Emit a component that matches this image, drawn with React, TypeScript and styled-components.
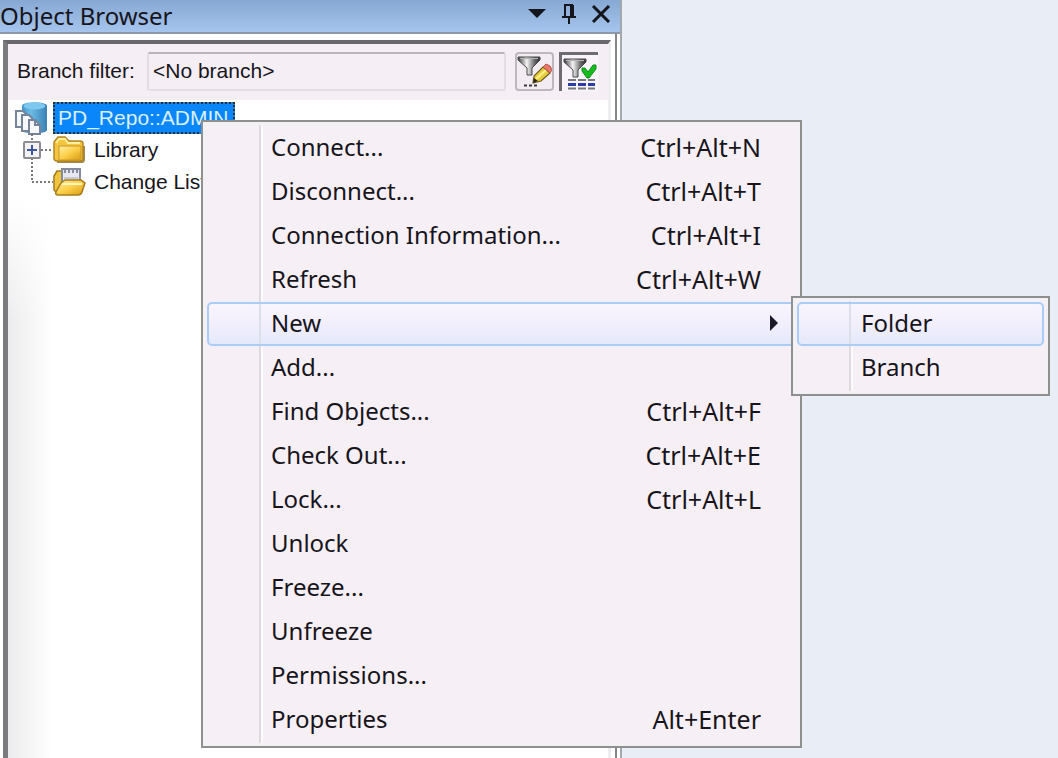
import React from "react";
import styled, { createGlobalStyle, css } from "styled-components";

const uiFont = `"Noto Sans", "Open Sans", sans-serif`;
const treeFont = `"Liberation Sans", Arial, sans-serif`;

const GlobalStyle = createGlobalStyle`
  *, *::before, *::after { box-sizing: border-box; }
  body {
    margin: 0;
    background: #e9eef6;
    color: #17151b;
    font-family: ${uiFont};
  }
`;

const Workspace = styled.div`
  position: relative;
  display: grid;
  grid-template-columns: minmax(0, 622fr) minmax(0, 436fr);
  min-height: 100vh;
  overflow: hidden;
`;

const DockPanel = styled.section`
  display: flex;
  flex-direction: column;
  background: #fff;
  border-right: 2px solid #a3a8ad;
`;

const TitleBar = styled.header`
  display: flex;
  align-items: center;
  justify-content: space-between;
  height: 34px;
  padding-right: 7px;
  background: linear-gradient(#86a8d2, #a6c5ee);
  border-bottom: 2px solid #8d99a8;
`;

const Title = styled.h1`
  margin: 0;
  font-size: 24px;
  line-height: 30px;
  font-weight: 400;
  white-space: nowrap;
`;

const TitleButtons = styled.div`
  display: flex;
  gap: 8px;
`;

const TitleButton = styled.button`
  display: grid;
  place-items: center;
  width: 24px;
  height: 28px;
  padding: 0 0 4px;
  border: 0;
  background: none;
  color: #14161c;
`;

const PanelFrame = styled.div`
  display: flex;
  flex: 1;
  margin-right: 3px;
  padding: 6px 4px 0 3px;
  border-right: 2px solid #85858a;
`;

const PanelBody = styled.div`
  display: flex;
  flex: 1;
  flex-direction: column;
  min-width: 0;
  border-top: 4px solid #69696d;
  border-left: 5px solid #7b7b7f;
  border-right: 3px solid #efedf0;
`;

const FilterBar = styled.div`
  display: flex;
  align-items: center;
  gap: 5px;
  padding: 8px 10px 9px 9px;
  background: #f5eef4;
`;

const FilterLabel = styled.label`
  flex: 0 0 125px;
  padding-bottom: 2px;
  font-family: ${treeFont};
  font-size: 21px;
  line-height: 24px;
  white-space: nowrap;
`;

const FilterInput = styled.input`
  flex: 1;
  min-width: 0;
  height: 39px;
  margin-right: 4px;
  padding: 0 4px 2px;
  border: 2px solid #e3dee3;
  border-top-color: #b9b5b9;
  border-radius: 3px;
  background: #f5eff5;
  color: #17151b;
  font-family: ${treeFont};
  font-size: 21px;
`;

const ToolButton = styled.button<{ $pressed?: boolean }>`
  display: grid;
  place-items: center;
  flex: 0 0 39px;
  height: 39px;
  padding: 0;
  ${({ $pressed }) =>
    $pressed
      ? css`
          border: 0 solid #6e6c70;
          border-width: 3px 0 0 3px;
          background: #f8f4f9;
        `
      : css`
          border: 2px solid #bdb8bd;
          border-radius: 4px;
          background: #f3edf3;
        `}
`;

const Tree = styled.ul`
  flex: 1;
  margin: 0;
  padding: 2px 0 0 6px;
  list-style: none;
  background:
    linear-gradient(#fff 100px, transparent 220px),
    linear-gradient(90deg, #ececee, #fff 44px);
`;

const TreeGroup = styled.ul`
  margin: 0;
  padding: 0;
  list-style: none;
`;

const TreeRow = styled.div`
  display: flex;
  align-items: center;
  height: 32px;
`;

const TreeText = styled.span<{ $selected?: boolean }>`
  font-family: ${treeFont};
  font-size: 21px;
  line-height: 28px;
  white-space: nowrap;
  ${({ $selected }) =>
    $selected
      ? css`
          margin-left: 5px;
          padding: 0 5px 0 3px;
          border: 2px dotted #3a2a1c;
          background: #0a86fb;
          color: #d9efff;
        `
      : css`
          margin-left: 8px;
        `}
`;

const MenuBox = styled.ul`
  position: absolute;
  margin: 0;
  padding: 4px;
  list-style: none;
  border: 2px solid #8e9090;
  background: linear-gradient(90deg, transparent 56px, #dfdade 56px, #dfdade 58px, #fcfafc 58px, #fcfafc 60px, transparent 60px),
    #f6eff5;
  box-shadow: inset 0 0 0 3px #f3f1f3;
`;

const ContextMenu = styled(MenuBox)`
  top: 120px;
  left: 201px;
  width: 601px;
`;

const SubMenu = styled(MenuBox)`
  top: -6px;
  left: calc(100% - 5px);
  width: 259px;
`;

const MenuEntry = styled.li`
  position: relative;
`;

const MenuButton = styled.button<{ $active?: boolean }>`
  display: flex;
  align-items: center;
  justify-content: space-between;
  width: 100%;
  height: 44px;
  padding: 0 33px 2px 62px;
  border: 2px solid transparent;
  border-radius: 5px;
  background: none;
  color: #17151b;
  font-family: ${uiFont};
  font-size: 24px;
  line-height: 38px;
  text-align: left;
  white-space: nowrap;
  ${({ $active }) =>
    $active &&
    css`
      border-color: #a9cdf8;
      background: linear-gradient(90deg, transparent 50px, #dcdeea 50px, #dcdeea 52px, transparent 52px),
        linear-gradient(#f8f5ff, #f3effc 45%, #e4e9fb);
    `}
`;

const Shortcut = styled.span`
  font-size: 25px;
`;

const ArrowSlot = styled.span`
  display: flex;
  margin-right: -18px;
`;

function RepositoryIcon() {
  return (
    <svg width="34" height="34" viewBox="0 0 34 34" aria-hidden="true">
      <defs>
        <linearGradient id="cylinder" x1="0" x2="1">
          <stop offset="0" stopColor="#3f93c6" />
          <stop offset=".35" stopColor="#6cbce6" />
          <stop offset="1" stopColor="#3a80b4" />
        </linearGradient>
      </defs>
      <path d="M8 5C8 0 33 0 33 5V29C33 33 13 34 8 30Z" fill="url(#cylinder)" />
      <ellipse cx="20.500" cy="5" rx="11" ry="3.500" fill="#7cc8ee" />
      <g fill="#f6f8fb" stroke="#76839a" strokeWidth="2">
        <path d="M2 10H9L12 13V26H2Z" />
        <path d="M8 14H15L18 17V30H8Z" />
        <path d="M15 19H21L26 24V33H15Z" />
        <path d="M21 19V24H26" fill="none" />
      </g>
    </svg>
  );
}

function FolderIcon({ open }: { open?: boolean }) {
  const fill = open ? "url(#folderOpen)" : "url(#folderShut)";
  return (
    <svg width="33" height="32" viewBox="0 0 33 32" aria-hidden="true">
      <defs>
        <linearGradient id={open ? "folderOpen" : "folderShut"} x1="0" y1="0" x2="1" y2="1">
          <stop offset="0" stopColor="#fff0a0" />
          <stop offset=".5" stopColor="#fbcf4a" />
          <stop offset="1" stopColor="#d99a12" />
        </linearGradient>
      </defs>
      {open ? (
        <>
          <path d="M1 10L4 5H10L11 25L5 28L1 24Z" fill="#f0c43c" stroke="#a87c1a" strokeWidth="1.500" />
          <path d="M9 3H27V17H9Z" fill="#e6e9f1" stroke="#858a9c" strokeWidth="2" />
          <path d="M12 2V7M16 2V7M20 2V7M24 2V7" stroke="#858a9c" strokeWidth="2" />
          <path d="M11 12H25" stroke="#b6bccb" strokeWidth="1.500" />
          <path d="M8 17L12 14H28L32 17L29 26Q28 29 25 29H5Q2 29 3 26Z" fill={fill} stroke="#a87c1a" strokeWidth="1.500" />
          <path d="M9 18H29" stroke="#fff6bd" strokeWidth="2" />
        </>
      ) : (
        <>
          <path d="M4 28L29 28Q31 28 31 25V12" fill="none" stroke="#a08850" strokeWidth="2" />
          <path d="M1 8L5 3H12L16 7H27Q30 7 30 10V24Q30 27 27 27H4Q1 27 1 24Z" fill="#f5c53d" stroke="#b58520" strokeWidth="1.500" />
          <path d="M6 12H28V24Q28 26 26 26H6Z" fill={fill} stroke="#c8962a" />
          <path d="M3 9L6 5H12L15 9H27" fill="none" stroke="#fff0a0" strokeWidth="2" />
        </>
      )}
    </svg>
  );
}

function Connector({ last }: { last?: boolean }) {
  return (
    <svg width="39" height="32" viewBox="0 0 39 32" aria-hidden="true">
      <path
        d={last ? "M18 0V16H39" : "M18 0V32M27 16H39"}
        fill="none"
        stroke="#77777c"
        strokeWidth="2"
        strokeDasharray="2 2"
      />
      {!last && (
        <>
          <rect x="10" y="8" width="16" height="16" rx="1" fill="#f3f3f6" stroke="#8c8c92" strokeWidth="2" />
          <path d="M13 16H23M18 11V21" stroke="#3c56a0" strokeWidth="2" />
        </>
      )}
    </svg>
  );
}

function Funnel() {
  return (
    <>
      <defs>
        <linearGradient id="funnel" x1="0" x2="1">
          <stop offset="0" stopColor="#3a3a3c" />
          <stop offset=".4" stopColor="#f4f4f4" />
          <stop offset=".75" stopColor="#6a6a6c" />
          <stop offset="1" stopColor="#2c2c2e" />
        </linearGradient>
      </defs>
      <path d="M1 3H23V6L15 14V21H10V14L1 6Z" fill="url(#funnel)" stroke="#4a4a4c" />
      <path d="M3 4.500H21" stroke="#b4b4b6" />
    </>
  );
}

function EditFilterIcon() {
  return (
    <svg width="35" height="35" viewBox="0 0 35 35" aria-hidden="true">
      <Funnel />
      <path d="M16 29L17 22L26 13L33 19L24 27Z" fill="#e6ce3c" stroke="#6e5c20" strokeWidth="1.200" />
      <path d="M19 25L29 16" stroke="#fff08a" strokeWidth="2" />
      <path d="M26 13L29 10Q34 11 35 16L33 19Z" fill="#e87868" stroke="#b8584c" />
      <path d="M16 29L17 24L21 27Z" fill="#2c2418" />
      <path d="M7 31.500H10M12 31.500H15M17 31.500H20" stroke="#3a3a3e" strokeWidth="2" />
    </svg>
  );
}

function ApplyFilterIcon() {
  return (
    <svg width="34" height="35" viewBox="0 0 34 35" aria-hidden="true">
      <Funnel />
      <path d="M19 12H22L25 16L30 9H33V13L26 22H24L19 15Z" fill="#14bc1c" stroke="#128a1c" />
      <g strokeWidth="2" fill="none">
        <path d="M5 24H13M15 24H23M25 24H32M5 32.500H13M15 32.500H23M25 32.500H32" stroke="#77777e" />
        <path d="M5 28.500H13M15 28.500H23M25 28.500H32" stroke="#2c3ca8" strokeWidth="3" />
      </g>
    </svg>
  );
}

interface MenuItem {
  label: string;
  shortcut?: string;
  children?: string[];
}

const menuItems: MenuItem[] = [
  { label: "Connect...", shortcut: "Ctrl+Alt+N" },
  { label: "Disconnect...", shortcut: "Ctrl+Alt+T" },
  { label: "Connection Information...", shortcut: "Ctrl+Alt+I" },
  { label: "Refresh", shortcut: "Ctrl+Alt+W" },
  { label: "New", children: ["Folder", "Branch"] },
  { label: "Add..." },
  { label: "Find Objects...", shortcut: "Ctrl+Alt+F" },
  { label: "Check Out...", shortcut: "Ctrl+Alt+E" },
  { label: "Lock...", shortcut: "Ctrl+Alt+L" },
  { label: "Unlock" },
  { label: "Freeze..." },
  { label: "Unfreeze" },
  { label: "Permissions..." },
  { label: "Properties", shortcut: "Alt+Enter" },
];

export default function App() {
  return (
    <>
      <GlobalStyle />
      <Workspace>
        <DockPanel>
          <TitleBar>
            <Title>Object Browser</Title>
            <TitleButtons>
              <TitleButton type="button" aria-label="Window options">
                <svg width="18" height="10" viewBox="0 0 18 10">
                  <path d="M0 0H18L9 9Z" fill="currentColor" />
                </svg>
              </TitleButton>
              <TitleButton type="button" aria-label="Auto hide">
                <svg width="16" height="20" viewBox="0 0 16 20">
                  <path d="M4 13V1H11V13M1 13H15M8 13V20" fill="none" stroke="currentColor" strokeWidth="2" />
                  <path d="M11 1V13" stroke="currentColor" strokeWidth="4" />
                </svg>
              </TitleButton>
              <TitleButton type="button" aria-label="Close">
                <svg width="20" height="18" viewBox="0 0 20 18">
                  <path d="M2 1L18 17M18 1L2 17" stroke="currentColor" strokeWidth="3" />
                </svg>
              </TitleButton>
            </TitleButtons>
          </TitleBar>
          <PanelFrame>
            <PanelBody>
              <FilterBar>
                <FilterLabel htmlFor="branch-filter">Branch filter:</FilterLabel>
                <FilterInput id="branch-filter" readOnly value="<No branch>" />
                <ToolButton type="button" aria-label="Edit filter">
                  <EditFilterIcon />
                </ToolButton>
                <ToolButton type="button" aria-label="Apply filter" aria-pressed="true" $pressed>
                  <ApplyFilterIcon />
                </ToolButton>
              </FilterBar>
              <Tree>
                <li>
                  <TreeRow>
                    <RepositoryIcon />
                    <TreeText $selected>PD_Repo::ADMIN</TreeText>
                  </TreeRow>
                  <TreeGroup>
                    <li>
                      <TreeRow>
                        <Connector />
                        <FolderIcon />
                        <TreeText>Library</TreeText>
                      </TreeRow>
                    </li>
                    <li>
                      <TreeRow>
                        <Connector last />
                        <FolderIcon open />
                        <TreeText>Change Lists</TreeText>
                      </TreeRow>
                    </li>
                  </TreeGroup>
                </li>
              </Tree>
            </PanelBody>
          </PanelFrame>
        </DockPanel>
        <ContextMenu role="menu">
          {menuItems.map(({ label, shortcut, children }) => (
            <MenuEntry key={label} role="none">
              <MenuButton type="button" role="menuitem" $active={Boolean(children)}>
                <span>{label}</span>
                {shortcut && <Shortcut>{shortcut}</Shortcut>}
                {children && (
                  <ArrowSlot>
                    <svg width="10" height="16" viewBox="0 0 10 16" aria-hidden="true">
                      <path d="M1 0L9 8L1 16Z" fill="#1c1a28" />
                    </svg>
                  </ArrowSlot>
                )}
              </MenuButton>
              {children && (
                <SubMenu role="menu">
                  {children.map((child, index) => (
                    <MenuEntry key={child} role="none">
                      <MenuButton type="button" role="menuitem" $active={index === 0}>
                        <span>{child}</span>
                      </MenuButton>
                    </MenuEntry>
                  ))}
                </SubMenu>
              )}
            </MenuEntry>
          ))}
        </ContextMenu>
      </Workspace>
    </>
  );
}
